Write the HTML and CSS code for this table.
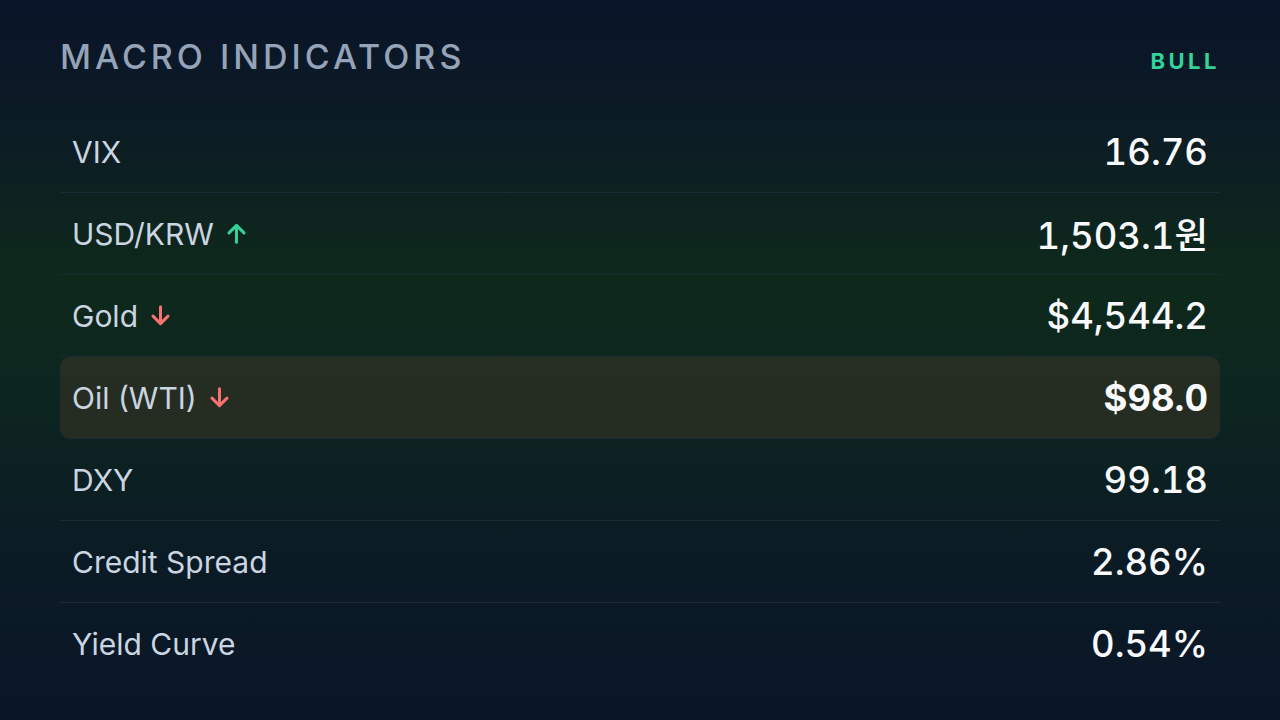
FILE: index.html
```html
<!doctype html>
<html lang="en">
<head>
    <meta charset="UTF-8">
    <meta name="viewport" content="width=device-width, initial-scale=1.0">
    <title>Macro Indicators</title>
    <link rel="stylesheet" href="styles.css">
</head>
<body>
    <div class="panel">
        <div class="panel__head">
            <h1>MACRO INDICATORS</h1>
            <span class="regime">BULL</span>
        </div>
        <ul class="rows">
            <li><span class="label">VIX</span><span class="value">16.76</span></li>
            <li>
                <span class="label">USD/KRW
                    <svg class="arrow up" viewBox="0 0 20 20"><path d="M10 17V3.5M4 9.5l6-6 6 6"/></svg>
                </span>
                <span class="value">1,503.1원</span>
            </li>
            <li>
                <span class="label">Gold
                    <svg class="arrow down" viewBox="0 0 20 20"><path d="M10 3v13.5M4 10.5l6 6 6-6"/></svg>
                </span>
                <span class="value">$4,544.2</span>
            </li>
            <li class="active">
                <span class="label">Oil (WTI)
                    <svg class="arrow down" viewBox="0 0 20 20"><path d="M10 3v13.5M4 10.5l6 6 6-6"/></svg>
                </span>
                <span class="value">$98.0</span>
            </li>
            <li><span class="label">DXY</span><span class="value">99.18</span></li>
            <li><span class="label">Credit Spread</span><span class="value">2.86%</span></li>
            <li><span class="label">Yield Curve</span><span class="value">0.54%</span></li>
        </ul>
    </div>
</body>
</html>
```

FILE: styles.css
```css
*, ::before, ::after {
    padding: 0;
    margin: 0;
    box-sizing: border-box;
}
html, body {
    height: 100%;
}
body {
    font-family: 'Inter', 'Noto Sans CJK KR', sans-serif;
    background: linear-gradient(180deg, #0a1429 0%, #0c1d24 20%, #0e291b 38%, #0d2520 55%, #0b1b25 78%, #0a1628 100%);
    color: #ffffff;
    overflow: hidden;
}
.panel {
    padding: 36px 60px 0;
}
.panel__head {
    display: flex;
    justify-content: space-between;
    align-items: center;
    padding-bottom: 34px;
}
.panel__head h1 {
    font-size: 34px;
    font-weight: 500;
    letter-spacing: 4px;
    color: #94a3b8;
}
.regime {
    font-size: 22px;
    font-weight: 700;
    letter-spacing: 3.5px;
    color: #34d399;
    margin-top: 8px;
}
.rows {
    list-style: none;
}
.rows li {
    height: 82px;
    display: flex;
    justify-content: space-between;
    align-items: center;
    padding: 0 12px;
    border-bottom: 1px solid #1c2a35;
}
.rows li:last-child {
    border-bottom: none;
}
.rows li.active {
    background: rgba(58, 52, 36, 0.55);
    border-radius: 10px;
}
.label {
    display: flex;
    align-items: center;
    gap: 10px;
    font-size: 30px;
    color: #cbd5e1;
}
.value {
    font-size: 36.5px;
    font-weight: 500;
    color: #f8fafc;
    font-variant-numeric: tabular-nums;
}
.active .value {
    font-weight: 700;
}
.arrow {
    width: 25px;
    height: 25px;
    fill: none;
    stroke-width: 2.4;
    stroke-linecap: round;
    stroke-linejoin: round;
}
.arrow.up {
    stroke: #34d399;
}
.arrow.down {
    stroke: #f87171;
}
```
